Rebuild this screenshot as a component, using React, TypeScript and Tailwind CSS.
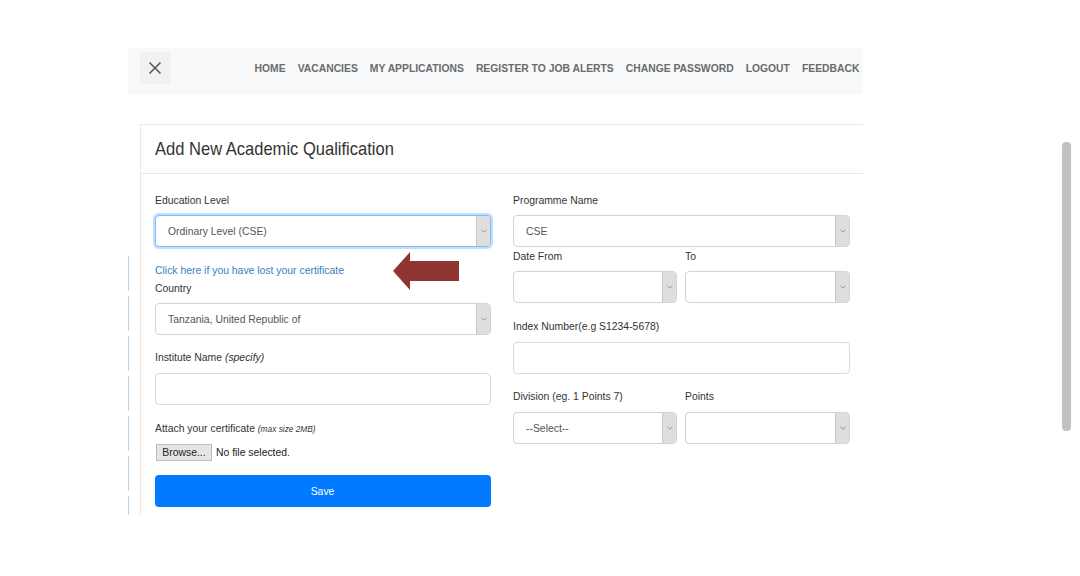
import React from "react";

const font = { fontFamily: '"Liberation Sans", Arial, sans-serif' };
const SQ = "inline-block whitespace-nowrap origin-left scale-x-[0.945]";

function Chevron() {
  return (
    <svg width="6" height="4" viewBox="0 0 6 4" fill="none">
      <path d="M0.5 0.8 L3 3.2 L5.5 0.8" stroke="#8a8a8a" strokeWidth="0.9" />
    </svg>
  );
}

function Select({ value, focused }: { value?: string; focused?: boolean }) {
  return (
    <div
      className={
        "flex h-[32px] items-stretch rounded-[4px] border bg-white overflow-hidden " +
        (focused
          ? "border-[#80bdff] shadow-[0_0_0_2px_rgba(0,123,255,0.25)]"
          : "border-[#d4d4d4]")
      }
    >
      <div className="flex-1 flex items-center pl-[12px] pt-[1px] text-[11px] text-[#555]">
        <span className={SQ}>{value}</span>
      </div>
      <div className="w-[14px] my-[-1px] bg-[#dedede] border-l border-[#c8c8c8] flex items-center justify-center">
        <Chevron />
      </div>
    </div>
  );
}

function Input() {
  return <div className="h-[32px] rounded-[4px] border border-[#d9d9d9] bg-white" />;
}

function Label({ children, className = "" }: { children: React.ReactNode; className?: string }) {
  return (
    <div className={"h-[16px] leading-[16px] text-[11px] text-[#333] " + className}>
      <span className={SQ}>{children}</span>
    </div>
  );
}

export default function App() {
  const nav = ["HOME", "VACANCIES", "MY APPLICATIONS", "REGISTER TO JOB ALERTS", "CHANGE PASSWORD", "LOGOUT", "FEEDBACK"];
  return (
    <div className="relative w-[1080px] h-[576px] bg-white overflow-hidden" style={font}>
      <div className="ml-[128px] mt-[48px] w-[735px] h-[467px] overflow-hidden flex flex-col">
        {/* navbar */}
        <div className="h-[43px] shrink-0 bg-[#f8f9fa] shadow-[0_2px_3px_rgba(0,0,0,0.06)] flex items-center pl-[12px] pr-[4px] relative z-10">
          <div className="w-[30px] h-[32px] mt-[-3px] bg-[#f0f1f2] flex items-center justify-center">
            <svg width="14" height="14" viewBox="0 0 14 14">
              <path d="M1.5 1.5 L12.5 12.5 M12.5 1.5 L1.5 12.5" stroke="#555" strokeWidth="1.5" />
            </svg>
          </div>
          <div className="flex-1" />
          <div className="flex gap-[12.8px] text-[11px] font-bold text-[#6b6b6b] mt-[-3px] whitespace-nowrap origin-right scale-x-[0.94]">
            {nav.map((n) => (
              <span key={n}>{n}</span>
            ))}
          </div>
        </div>

        {/* body */}
        <div className="flex flex-1 mt-[33px]">
          <div className="w-[12px] shrink-0">
            <div className="ml-0 mt-[132px] w-[1px] h-[300px] bg-[repeating-linear-gradient(to_bottom,#b9d3e8_0px,#b9d3e8_35px,transparent_35px,transparent_40px)]" />
          </div>
          <div className="flex-1 border-l border-t border-[#e8e8e8] flex flex-col">
            <div className="h-[49px] border-b border-[#e8e8e8] flex items-center pl-[14px]">
              <span className="inline-block whitespace-nowrap origin-left scale-x-[0.87] text-[19px] text-[#333]">
                Add New Academic Qualification
              </span>
            </div>
            <div className="flex gap-[22px] pl-[14px] pt-[18px]">
              {/* left column */}
              <div className="w-[336px] flex flex-col">
                <Label>Education Level</Label>
                <div className="mt-[7px]">
                  <Select value="Ordinary Level (CSE)" focused />
                </div>
                <div className="mt-[15px] flex items-center relative">
                  <span className={"text-[11px] leading-[16px] text-[#3a7dc0] " + SQ}>
                    Click here if you have lost your certificate
                  </span>
                  <svg className="absolute left-[238px] top-[-10px]" width="66" height="38" viewBox="0 0 66 38">
                    <path d="M0 19 L17 0 L17 9 L66 9 L66 29 L17 29 L17 38 Z" fill="#8e3431" />
                  </svg>
                </div>
                <Label className="mt-[2px]">Country</Label>
                <div className="mt-[7px]">
                  <Select value="Tanzania, United Republic of" />
                </div>
                <Label className="mt-[14px]">
                  Institute Name <i>(specify)</i>
                </Label>
                <div className="mt-[8px]">
                  <Input />
                </div>
                <Label className="mt-[15px]">
                  Attach your certificate <i className="text-[8.8px]">(max size 2MB)</i>
                </Label>
                <div className="mt-[8px] flex items-center h-[17px] text-[11px] text-[#222]">
                  <div className="h-[17px] w-[56px] ml-[1px] bg-[#e4e4e4] border border-[#bdbdbd] flex items-center justify-center">
                    <span className="inline-block whitespace-nowrap scale-x-[0.945]">Browse...</span>
                  </div>
                  <span className={"ml-[4px] " + SQ}>No file selected.</span>
                </div>
                <div className="mt-[14px] h-[32px] rounded-[4px] bg-[#007bff] flex items-center justify-center text-[11px] text-white">
                  <span className="inline-block scale-x-[0.945]">Save</span>
                </div>
              </div>
              {/* right column */}
              <div className="w-[337px] flex flex-col">
                <Label>Programme Name</Label>
                <div className="mt-[7px]">
                  <Select value="CSE" />
                </div>
                <div className="flex gap-[8px] mt-[1px]">
                  <div className="w-[164px]">
                    <Label>Date From</Label>
                    <div className="mt-[7px]">
                      <Select />
                    </div>
                  </div>
                  <div className="flex-1">
                    <Label>To</Label>
                    <div className="mt-[7px]">
                      <Select />
                    </div>
                  </div>
                </div>
                <Label className="mt-[15px]">Index Number(e.g S1234-5678)</Label>
                <div className="mt-[8px]">
                  <Input />
                </div>
                <div className="flex gap-[8px] mt-[14px]">
                  <div className="w-[164px]">
                    <Label>Division (eg. 1 Points 7)</Label>
                    <div className="mt-[8px]">
                      <Select value="--Select--" />
                    </div>
                  </div>
                  <div className="flex-1">
                    <Label>Points</Label>
                    <div className="mt-[8px]">
                      <Select />
                    </div>
                  </div>
                </div>
              </div>
            </div>
          </div>
        </div>
      </div>
      {/* scrollbar */}
      <div className="absolute left-[1062px] top-[142px] w-[9px] h-[289px] rounded-[4px] bg-[#c1c1c1]" />
    </div>
  );
}
